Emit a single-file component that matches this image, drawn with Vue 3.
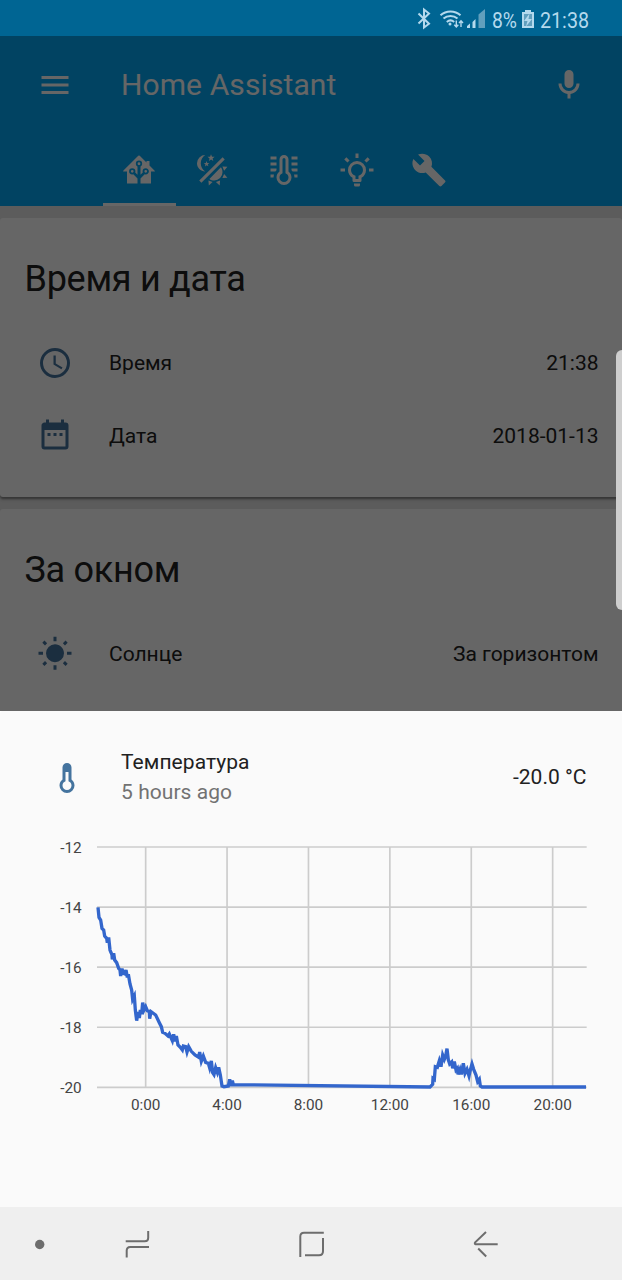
<template>
  <div class="phone">
    <div class="status-bar">
      <svg width="210" height="36" viewBox="412 0 210 36">
        <path class="line" d="M418.500 13.500l10.500 10.200-5 3.800V9.500l5 4-10.500 10" />
        <g class="line">
          <path d="M440.500 15.200a15 15 0 0 1 20 0" />
          <path d="M443.500 18.600a10.500 10.500 0 0 1 14 0" />
          <path d="M446.800 21.900a5.800 5.800 0 0 1 7.400 0" />
        </g>
        <circle class="fill" cx="450" cy="24" r="1.5" />
        <path class="thin" d="M456.300 20.500v6.300m-2-2l2 2.200 2-2.200M461 27v-6m-2 2l2-2.200 2 2.200" />
        <path class="fill" d="M467 28v-2l3-2.500V28zM472.500 28v-6l3-3v9z" />
        <path class="faint" d="M478.500 28V14.500l6.500-5.500v19z" />
        <text class="fill status-text" x="492" y="28" textLength="25" lengthAdjust="spacingAndGlyphs">8%</text>
        <path class="fill" fill-rule="evenodd" d="M525 10h6v2h3v16h-12V12h3zM524 14v12h8V14z" />
        <path class="faint" d="M524 14h8v12h-8z" />
        <path class="fill" d="M529.500 13.500l-5.500 7.500h3.500l-1.500 5.500 6-7.500h-3.500z" />
        <text class="fill status-text" x="540" y="28" textLength="49" lengthAdjust="spacingAndGlyphs">21:38</text>
      </svg>
    </div>

    <div class="page">
      <header class="header">
        <div class="toolbar">
          <svg class="icon" viewBox="0 0 24 24"><path :d="icons.menu" /></svg>
          <span class="title">Home Assistant</span>
          <svg class="icon" viewBox="0 0 24 24"><path :d="icons.mic" /></svg>
        </div>
        <nav class="tabs">
          <div v-for="tab in tabs" :key="tab" class="tab" :class="{ active: tab === activeTab }">
            <svg class="icon" viewBox="0 0 24 24"><path :d="icons[tab]" /></svg>
          </div>
        </nav>
      </header>

      <section v-for="card in cards" :key="card.title" class="card">
        <h2>{{ card.title }}</h2>
        <div v-for="row in card.rows" :key="row.name" class="row">
          <svg class="icon" viewBox="0 0 24 24"><path :d="icons[row.icon]" /></svg>
          <span class="name">{{ row.name }}</span>
          <span>{{ row.state }}</span>
        </div>
      </section>
      <div class="scrim"></div>
    </div>

    <section class="sheet">
      <div class="sheet-head">
        <svg class="icon" viewBox="0 0 24 24"><path :d="icons.thermometer" /></svg>
        <div class="info">
          <div>Температура</div>
          <div class="ago">5 hours ago</div>
        </div>
        <span>-20.0 °C</span>
      </div>

      <svg class="chart" viewBox="0 0 1866 900">
        <g class="grid">
          <line v-for="t in yTicks" :key="t.label" x1="291" x2="1760" :y1="t.y" :y2="t.y" />
          <line v-for="t in xTicks" :key="t.label" :x1="t.x" :x2="t.x" y1="51" y2="772" />
        </g>
        <g class="labels">
          <text v-for="t in yTicks" :key="t.label" x="245" :y="t.y + 17" text-anchor="end">{{ t.label }}</text>
          <text v-for="t in xTicks" :key="t.label" :x="t.x" y="841" text-anchor="middle">{{ t.label }}</text>
        </g>
        <polyline class="trace" transform="translate(120 0)" :points="trace" />
      </svg>
    </section>

    <footer class="nav-bar">
      <svg viewBox="0 0 24 28"><circle cx="11.700" cy="14.500" r="4.700" /></svg>
      <svg viewBox="0 0 24 28">
        <path d="M-.3 11.300h19q3.500 0 3.500-3.500V1M23 17H4.200Q.7 17 .7 20.500v7" />
      </svg>
      <svg viewBox="0 0 24 28">
        <path d="M23.800 2.800H4Q.3 2.800.3 6.500V27M23 8v13.300q0 4-4 4H5" />
      </svg>
      <svg viewBox="0 0 24 28">
        <path d="M23.700 14.300H1.700q-1.500-.5-.5-2L12 2M4.200 18.500l8 8" />
      </svg>
    </footer>

    <div class="edge-handle"></div>
  </div>
</template>

<script setup>
import { ref } from 'vue'

const icons = {
  menu: 'M3,6H21V8H3V6M3,11H21V13H3V11M3,16H21V18H3V16Z',
  mic: 'M12,2A3,3 0 0,1 15,5V11A3,3 0 0,1 12,14A3,3 0 0,1 9,11V5A3,3 0 0,1 12,2M19,11C19,14.53 16.39,17.44 13,17.93V21H11V17.93C7.61,17.44 5,14.53 5,11H7A5,5 0 0,0 12,16A5,5 0 0,0 17,11H19Z',
  home: 'M21.8,13H20V21H13V17.67L15.79,14.88L16.5,15C17.66,15 18.6,14.06 18.6,12.9C18.6,11.74 17.66,10.8 16.5,10.8A2.1,2.1 0 0,0 14.4,12.9L14.5,13.61L13,15.13V9.65C13.66,9.29 14.1,8.6 14.1,7.8A2.1,2.1 0 0,0 12,5.7A2.1,2.1 0 0,0 9.9,7.8C9.9,8.6 10.34,9.29 11,9.65V15.13L9.5,13.61L9.6,12.9A2.1,2.1 0 0,0 7.5,10.8A2.1,2.1 0 0,0 5.4,12.9A2.1,2.1 0 0,0 7.5,15L8.21,14.88L11,17.67V21H4V13H2.25C1.83,13 1.42,13 1.42,12.79C1.43,12.57 1.85,12.15 2.28,11.72L11,3C11.33,2.67 11.67,2.33 12,2.33C12.33,2.33 12.67,2.67 13,3L17,7V6H19V9L21.78,11.78C22.18,12.18 22.59,12.59 22.6,12.8C22.6,13 22.2,13 21.8,13M7.5,12A0.9,0.9 0 0,1 8.4,12.9A0.9,0.9 0 0,1 7.5,13.8A0.9,0.9 0 0,1 6.6,12.9A0.9,0.9 0 0,1 7.5,12M16.5,12C17,12 17.4,12.4 17.4,12.9C17.4,13.4 17,13.8 16.5,13.8A0.9,0.9 0 0,1 15.6,12.9A0.9,0.9 0 0,1 16.5,12M12,6.9C12.5,6.9 12.9,7.3 12.9,7.8C12.9,8.3 12.5,8.7 12,8.7C11.5,8.7 11.1,8.3 11.1,7.8C11.1,7.3 11.5,6.9 12,6.9Z',
  dayNight: 'M7.5,2C5.71,3.15 4.5,5.18 4.5,7.5C4.5,9.82 5.71,11.85 7.53,13C4.46,13 2,10.54 2,7.5A5.5,5.5 0 0,1 7.5,2M19.07,3.5L20.5,4.93L4.93,20.5L3.5,19.07L19.07,3.5M12.89,5.93L11.41,5L9.97,6L10.39,4.3L9,3.24L10.75,3.12L11.33,1.47L12,3.1L13.73,3.13L12.38,4.26L12.89,5.93M9.59,9.54L8.43,8.81L7.31,9.59L7.65,8.27L6.56,7.44L7.92,7.35L8.37,6.06L8.88,7.33L10.24,7.36L9.19,8.23L9.59,9.54M19,13.5A5.5,5.5 0 0,1 13.5,19C12.28,19 11.15,18.6 10.24,17.93L17.93,10.24C18.6,11.15 19,12.28 19,13.5M14.6,20.08L17.37,18.93L17.13,22.28L14.6,20.08M18.93,17.38L20.08,14.61L22.28,17.15L18.93,17.38M20.08,12.42L18.94,9.64L22.28,9.88L20.08,12.42M9.63,18.93L12.4,20.08L9.87,22.27L9.63,18.93Z',
  climate: 'M17,17A5,5 0 0,1 12,22A5,5 0 0,1 7,17C7,15.36 7.79,13.91 9,13V5A3,3 0 0,1 12,2A3,3 0 0,1 15,5V13C16.21,13.91 17,15.36 17,17M11,5V14.17C9.83,14.58 9,15.69 9,17A3,3 0 0,0 12,20A3,3 0 0,0 15,17C15,15.69 14.17,14.58 13,14.17V5A1,1 0 0,0 11,5ZM3,3H7V5H3ZM3,7H7V9H3ZM3,11H7V12.1L6.25,13H3ZM3,15H5.3L5,17H3ZM17,3H21V5H17ZM17,7H21V9H17ZM17,11H21V13H17.75L17,12.1ZM18.7,15H21V17H19Z',
  light: 'M20,11H23V13H20V11M1,11H4V13H1V11M13,1V4H11V1H13M4.92,3.5L7.05,5.64L5.63,7.05L3.5,4.93L4.92,3.5M16.95,5.63L19.07,3.5L20.5,4.93L18.37,7.05L16.95,5.63M12,6A6,6 0 0,1 18,12C18,14.22 16.79,16.16 15,17.2V19A1,1 0 0,1 14,20H10A1,1 0 0,1 9,19V17.2C7.21,16.16 6,14.22 6,12A6,6 0 0,1 12,6M14,21V22A1,1 0 0,1 13,23H11A1,1 0 0,1 10,22V21H14M11,18H13V15.87C14.73,15.43 16,13.86 16,12A4,4 0 0,0 12,8A4,4 0 0,0 8,12C8,13.86 9.27,15.43 11,15.87V18Z',
  wrench: 'M22.7,19L13.6,9.9C14.5,7.6 14,4.9 12.1,3C10.1,1 7.1,0.6 4.7,1.7L9,6L6,9L1.6,4.7C0.4,7.1 0.9,10.1 2.9,12.1C4.8,14 7.5,14.5 9.8,13.6L18.9,22.7C19.3,23.1 19.9,23.1 20.3,22.7L22.6,20.4C23.1,20 23.1,19.3 22.7,19Z',
  clock: 'M12,20A8,8 0 0,0 20,12A8,8 0 0,0 12,4A8,8 0 0,0 4,12A8,8 0 0,0 12,20M12,2A10,10 0 0,1 22,12A10,10 0 0,1 12,22C6.47,22 2,17.5 2,12A10,10 0 0,1 12,2M12.5,7V12.25L17,14.92L16.25,16.15L11,13V7H12.5Z',
  calendar: 'M9,10H7V12H9V10M13,10H11V12H13V10M17,10H15V12H17V10M19,3H18V1H16V3H8V1H6V3H5C3.89,3 3,3.9 3,5V19A2,2 0 0,0 5,21H19A2,2 0 0,0 21,19V5A2,2 0 0,0 19,3M19,19H5V8H19V19Z',
  sun: 'M3.55,18.54L4.96,19.95L6.76,18.16L5.34,16.74M11,22.45C11.32,22.45 13,22.45 13,22.45V19.5H11M12,5.5A6,6 0 0,0 6,11.5A6,6 0 0,0 12,17.5A6,6 0 0,0 18,11.5C18,8.18 15.31,5.5 12,5.5M20,12.5H23V10.5H20M17.24,18.16L19.04,19.95L20.45,18.54L18.66,16.74M20.45,4.46L19.04,3.05L17.24,4.84L18.66,6.26M13,0.55H11V3.5H13M4,10.5H1V12.5H4M6.76,4.84L4.96,3.05L3.55,4.46L5.34,6.26L6.76,4.84Z',
  thermometer: 'M17,17A5,5 0 0,1 12,22A5,5 0 0,1 7,17C7,15.36 7.79,13.91 9,13V5A3,3 0 0,1 12,2A3,3 0 0,1 15,5V13C16.21,13.91 17,15.36 17,17M11,8V14.17C9.83,14.58 9,15.69 9,17A3,3 0 0,0 12,20A3,3 0 0,0 15,17C15,15.69 14.17,14.58 13,14.17V8H11Z'
}

const tabs = ['home', 'dayNight', 'climate', 'light', 'wrench']
const activeTab = ref('home')

const cards = [
  {
    title: 'Время и дата',
    rows: [
      { icon: 'clock', name: 'Время', state: '21:38' },
      { icon: 'calendar', name: 'Дата', state: '2018-01-13' }
    ]
  },
  {
    title: 'За окном',
    rows: [{ icon: 'sun', name: 'Солнце', state: 'За горизонтом' }]
  }
]

const yTicks = ['-12', '-14', '-16', '-18', '-20'].map((label, i) => ({ label, y: 51 + i * 180.25 }))
const xTicks = ['0:00', '4:00', '8:00', '12:00', '16:00', '20:00'].map((label, i) => ({ label, x: 437 + i * 244.2 }))

const trace = `174,232 177,262 182,270 186,295 191,300 194,318 200,325 202,338 206,322 210,360
  216,375 217,388 221,370 224,390 230,398 236,415 240,420 242,438 246,416 250,430 255,432 258,420
  262,442 265,433 270,462 275,480 278,508 283,498 286,540 290,572 294,546 298,564 301,540 305,552
  308,518 312,540 317,530 322,542 328,545 329,566 333,545 347,555 358,578 364,590 368,607 375,610
  384,618 388,612 397,632 401,613 405,634 409,618 414,645 421,652 427,660 430,648 437,650 441,666
  446,650 454,664 465,675 476,682 479,666 484,694 490,678 497,697 505,700 509,714 514,693 518,728
  522,734 527,713 532,727 536,712 541,735 546,768 552,770 565,768 569,748 573,768 577,752 580,764
  1170,771 1178,763 1179,745 1183,748 1186,710 1192,712 1198,692 1203,710 1208,675 1213,688
  1217,678 1221,656 1225,690 1229,702 1235,696 1238,715 1243,695 1248,720 1252,715 1254,733
  1260,718 1264,733 1270,700 1275,730 1281,718 1287,738 1291,720 1296,702 1301,718 1308,735
  1313,755 1318,748 1321,768 1326,771 1638,771`
</script>

<style>
body {
  margin: 0;
}
</style>

<style scoped>
.phone {
  position: relative;
  display: flex;
  flex-direction: column;
  width: 622px;
  height: 1280px;
  overflow: hidden;
  font-family: Roboto, 'Noto Sans', sans-serif;
  font-size: 21px;
  color: #212121;
}

svg {
  display: block;
  flex: none;
}

.icon {
  width: 36px;
  height: 36px;
  fill: #44739e;
}

.status-bar {
  display: flex;
  justify-content: flex-end;
  height: 36px;
  flex: none;
  background: #006593;
}
.status-bar svg {
  overflow: visible;
}
.status-bar .fill {
  fill: #b4d9ed;
}
.status-bar .faint {
  fill: #619fbd;
}
.status-bar .line,
.status-bar .thin {
  fill: none;
  stroke: #b4d9ed;
  stroke-width: 2;
}
.status-bar .thin {
  stroke-width: 1.4;
}
.status-text {
  font-size: 22.5px;
}

.page {
  position: relative;
  height: 675px;
  flex: none;
  overflow: hidden;
  background: #e5e5e5;
}

.scrim {
  position: absolute;
  inset: 0;
  background: rgba(0, 0, 0, 0.6);
}

.header {
  height: 170px;
  background: #03a9f4;
  color: #fff;
}
.header .icon {
  fill: #fff;
}

.toolbar {
  display: flex;
  align-items: center;
  height: 97px;
  padding: 0 35.5px 0 36.5px;
}
.title {
  flex: 1;
  margin-left: 48.5px;
  font-size: 30px;
  letter-spacing: 0.1px;
}

.tabs {
  display: flex;
  height: 73px;
  padding-left: 103px;
}
.tab {
  display: flex;
  align-items: center;
  justify-content: center;
  box-sizing: border-box;
  width: 72.5px;
  padding-top: 3px;
  border-bottom: 3px solid transparent;
}
.tab.active {
  border-bottom-color: #fff;
}

.card {
  box-sizing: border-box;
  height: 278.5px;
  margin-top: 12px;
  padding: 37px 23.5px 0 24.5px;
  border-radius: 3px;
  background: #fff;
  box-shadow: 0 3px 3px rgba(0, 0, 0, 0.14), 0 2px 2px rgba(0, 0, 0, 0.3);
}
.card h2 {
  margin: 0 0 24px;
  font-size: 36px;
  line-height: 48px;
  font-weight: 400;
  letter-spacing: -0.28px;
}

.row {
  display: flex;
  align-items: center;
  height: 72.5px;
  padding-left: 12px;
}
.row .name {
  flex: 1;
  margin-left: 36.5px;
}

.sheet {
  flex: 1;
  border-radius: 3px 3px 0 0;
  background: #fafafa;
}
.sheet-head {
  display: flex;
  align-items: center;
  height: 60px;
  padding: 36px 35.5px 0 48.5px;
}
.sheet-head .icon {
  margin-top: 2px;
}
.info {
  flex: 1;
  margin-left: 36.5px;
  line-height: 30px;
  letter-spacing: 0.06px;
}
.ago {
  color: #727272;
}

.chart {
  width: 622px;
  height: 300px;
  margin-top: 23px;
}
.grid line {
  stroke: #ccc;
  stroke-width: 5;
}
.labels text {
  fill: #444;
  font-size: 46px;
}
.trace {
  fill: none;
  stroke: #3366cc;
  stroke-width: 10;
}

.nav-bar {
  display: flex;
  align-items: center;
  height: 73px;
  flex: none;
  padding-left: 28px;
  background: #efefef;
}
.nav-bar svg {
  width: 24px;
  height: 28px;
  margin-right: 150px;
  overflow: visible;
}
.nav-bar svg:first-child {
  margin-right: 74px;
}
.nav-bar path {
  fill: none;
  stroke: #6d6d6d;
  stroke-width: 2;
}
.nav-bar circle {
  fill: #6d6d6d;
}

.edge-handle {
  position: absolute;
  top: 350px;
  right: 0;
  width: 6.5px;
  height: 260px;
  border-radius: 8px 0 0 8px;
  background: #cecece;
}
</style>
